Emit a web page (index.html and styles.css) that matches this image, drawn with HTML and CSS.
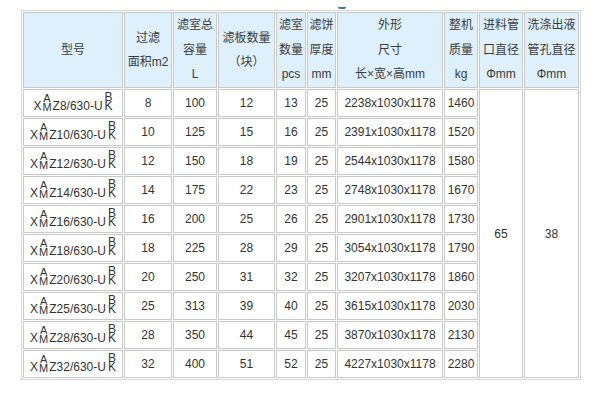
FILE: index.html
```html
<!DOCTYPE html>
<html lang="zh-CN">
<head>
<meta charset="utf-8">
<title>型号参数表</title>
<link rel="stylesheet" href="styles.css">
</head>
<body>
<div class="page">
  <span class="mark"></span>
  <table class="spec">
    <thead>
      <tr>
        <th class="w1">型号</th>
        <th class="w2">过滤<br>面积m2</th>
        <th class="w3">滤室总<br>容量<br>L</th>
        <th class="w4">滤板数量<br>（块）</th>
        <th class="w5">滤室<br>数量<br>pcs</th>
        <th class="w6">滤饼<br>厚度<br>mm</th>
        <th class="w7">外形<br>尺寸<br>长×宽×高mm</th>
        <th class="w8">整机<br>质量<br>kg</th>
        <th class="w9">进料管<br>口直径<br>Φmm</th>
        <th class="w10">洗涤出液<br>管孔直径<br>Φmm</th>
      </tr>
    </thead>
    <tbody>
      <tr>
        <td class="model">X<span class="stk am"><i>A</i><i>M</i></span>Z8/630-U<span class="stk bk"><i>B</i><i>K</i></span></td>
        <td>8</td><td>100</td><td>12</td><td>13</td><td>25</td><td>2238x1030x1178</td><td>1460</td>
        <td rowspan="10">65</td><td rowspan="10">38</td>
      </tr>
      <tr>
        <td class="model">X<span class="stk am"><i>A</i><i>M</i></span>Z10/630-U<span class="stk bk"><i>B</i><i>K</i></span></td>
        <td>10</td><td>125</td><td>15</td><td>16</td><td>25</td><td>2391x1030x1178</td><td>1520</td>
      </tr>
      <tr>
        <td class="model">X<span class="stk am"><i>A</i><i>M</i></span>Z12/630-U<span class="stk bk"><i>B</i><i>K</i></span></td>
        <td>12</td><td>150</td><td>18</td><td>19</td><td>25</td><td>2544x1030x1178</td><td>1580</td>
      </tr>
      <tr>
        <td class="model">X<span class="stk am"><i>A</i><i>M</i></span>Z14/630-U<span class="stk bk"><i>B</i><i>K</i></span></td>
        <td>14</td><td>175</td><td>22</td><td>23</td><td>25</td><td>2748x1030x1178</td><td>1670</td>
      </tr>
      <tr>
        <td class="model">X<span class="stk am"><i>A</i><i>M</i></span>Z16/630-U<span class="stk bk"><i>B</i><i>K</i></span></td>
        <td>16</td><td>200</td><td>25</td><td>26</td><td>25</td><td>2901x1030x1178</td><td>1730</td>
      </tr>
      <tr>
        <td class="model">X<span class="stk am"><i>A</i><i>M</i></span>Z18/630-U<span class="stk bk"><i>B</i><i>K</i></span></td>
        <td>18</td><td>225</td><td>28</td><td>29</td><td>25</td><td>3054x1030x1178</td><td>1790</td>
      </tr>
      <tr>
        <td class="model">X<span class="stk am"><i>A</i><i>M</i></span>Z20/630-U<span class="stk bk"><i>B</i><i>K</i></span></td>
        <td>20</td><td>250</td><td>31</td><td>32</td><td>25</td><td>3207x1030x1178</td><td>1860</td>
      </tr>
      <tr>
        <td class="model">X<span class="stk am"><i>A</i><i>M</i></span>Z25/630-U<span class="stk bk"><i>B</i><i>K</i></span></td>
        <td>25</td><td>313</td><td>39</td><td>40</td><td>25</td><td>3615x1030x1178</td><td>2030</td>
      </tr>
      <tr>
        <td class="model">X<span class="stk am"><i>A</i><i>M</i></span>Z28/630-U<span class="stk bk"><i>B</i><i>K</i></span></td>
        <td>28</td><td>350</td><td>44</td><td>45</td><td>25</td><td>3870x1030x1178</td><td>2130</td>
      </tr>
      <tr>
        <td class="model">X<span class="stk am"><i>A</i><i>M</i></span>Z32/630-U<span class="stk bk"><i>B</i><i>K</i></span></td>
        <td>32</td><td>400</td><td>51</td><td>52</td><td>25</td><td>4227x1030x1178</td><td>2280</td>
      </tr>
    </tbody>
  </table>
</div>
</body>
</html>
```
FILE: styles.css
```css
html, body {
  margin: 0;
  padding: 0;
  background: #ffffff;
}

.page {
  position: relative;
  padding: 10px 0 0 21px;
  font-family: "Liberation Sans", "Noto Sans CJK SC", sans-serif;
  font-size: 12px;
  color: #333333;
}

.mark {
  position: absolute;
  left: 338px;
  top: 7px;
  width: 8px;
  height: 2px;
  background: #3d7a9a;
  border-radius: 0 0 3px 3px;
}

.spec {
  table-layout: fixed;
  width: 560px;
  border-collapse: separate;
  border-spacing: 1px;
  border: 1px solid #d6d6d6;
}

.spec th,
.spec td {
  box-sizing: border-box;
  border: 1px solid #c9c9c9;
  padding: 0;
  text-align: center;
  vertical-align: middle;
  white-space: nowrap;
}

.spec th {
  height: 76px;
  background: #ddf0fc;
  font-weight: normal;
  line-height: 24.5px;
  color: #3c3c3c;
}

.spec td {
  height: 28px;
  line-height: 16px;
}

.w1 { width: 100px; }
.w2 { width: 48px; }
.w3 { width: 44px; }
.w4 { width: 57px; }
.w5 { width: 30px; }
.w6 { width: 29px; }
.w7 { width: 106px; }
.w8 { width: 34px; }
.w9 { width: 44px; }
.w10 { width: 55px; }

.stk {
  display: inline-block;
  text-align: center;
}

.stk i {
  display: block;
  font-style: normal;
}

.am {
  font-size: 11px;
  line-height: 9px;
  margin: 0 1px 0 1px;
  vertical-align: -1px;
}

.bk {
  font-size: 12px;
  line-height: 9px;
  margin-left: 2px;
  vertical-align: 0;
}
```
